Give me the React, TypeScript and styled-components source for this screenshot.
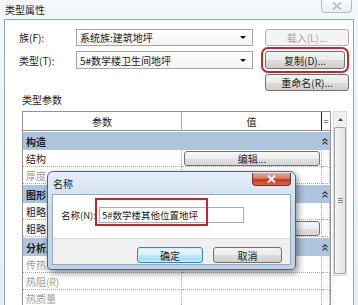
import * as React from "react";
import styled, { createGlobalStyle, css } from "styled-components";

const GlobalStyle = createGlobalStyle`
  *, *::before, *::after { box-sizing: border-box; }
  html, body { margin: 0; padding: 0; }
  body {
    width: 358px;
    height: 305px;
    overflow: hidden;
    font-family: "Noto Sans CJK SC", "Noto Sans", sans-serif;
    font-size: 10px;
    color: #1b1b1b;
  }
`;

const SWindow = styled.div`
  position: relative;
  width: 358px;
  height: 305px;
  overflow: hidden;
  display: flex;
  flex-direction: column;
  background: linear-gradient(180deg, #f4f7fb 0%, #e6edf5 100%);
`;

const STitleBar = styled.div`
  height: 20px;
  display: flex;
  align-items: flex-start;
  padding-left: 5px;
`;

const STitle = styled.span`
  font-size: 10px;
  line-height: 19px;
`;

const SWinClose = styled.div`
  margin-left: auto;
  margin-right: 6px;
  width: 31px;
  height: 13px;
  border: 1px solid #b3bcc6;
  border-top: none;
  border-radius: 0 0 4px 4px;
  background: linear-gradient(#fbfcfd, #e9edf1);
  display: flex;
  align-items: center;
  justify-content: center;
`;

const SBody = styled.div`
  flex: 1;
  margin: 0 4px;
  border: 1px solid #97a4b1;
  border-bottom: none;
  background: #fff;
  padding: 9px 0 0 14px;
  display: flex;
  flex-direction: column;
`;

const SForm = styled.div`
  display: grid;
  grid-template-columns: 45px 177px 84px;
  grid-template-rows: 17px 18px 17px;
  column-gap: 12px;
  row-gap: 5px;
`;

const SLabel = styled.span`
  align-self: center;
  white-space: nowrap;
`;

const SSelect = styled.div`
  display: flex;
  align-items: center;
  justify-content: space-between;
  border: 1px solid #a6a6a6;
  background: linear-gradient(#ffffff, #f3f3f3);
  padding: 0 6px 0 3px;
  white-space: nowrap;
`;

const SArrow = styled.span`
  width: 0;
  height: 0;
  border-left: 3px solid transparent;
  border-right: 3px solid transparent;
  border-top: 3px solid #111;
`;

const SButton = styled.div<{ $disabled?: boolean; $col?: number; $width?: number; $mark?: boolean }>`
  display: flex;
  align-items: center;
  justify-content: center;
  white-space: nowrap;
  border: 1px solid #707070;
  border-radius: 3px;
  background: linear-gradient(#f3f3f3 0%, #ebebeb 50%, #dddddd 51%, #cfcfcf 100%);
  ${({ $col }) => $col && css`grid-column: ${$col};`}
  ${({ $width }) => $width && css`width: ${$width}px;`}
  ${({ $disabled }) =>
    $disabled &&
    css`
      border-color: #adb2b5;
      background: #f4f4f4;
      color: #a3a3a3;
    `}
  ${({ $mark }) =>
    $mark &&
    css`
      outline: 2px solid #c4262d;
      outline-offset: 2px;
    `}
`;

const SSectionLabel = styled.div`
  margin: 2px 0 4px 3px;
  line-height: 14px;
`;

const STableArea = styled.div`
  display: flex;
  align-items: flex-start;
  gap: 2px;
  padding-left: 3px;
`;

const STable = styled.div`
  width: 309px;
  border: 1px solid #8d96a0;
  border-bottom: none;
  display: grid;
  grid-template-columns: 159px 140px 1fr;
`;

const SHeadCell = styled.div<{ $eq?: boolean }>`
  height: 19px;
  border-bottom: 1px solid #8d96a0;
  border-right: 1px solid #a9a9a9;
  display: flex;
  align-items: center;
  justify-content: center;
  ${({ $eq }) =>
    $eq &&
    css`
      border-right: none;
      border-left: 1px solid #222;
      margin-left: -1px;
      font-size: 9px;
    `}
`;

const SBand = styled.div`
  grid-column: 1 / -1;
  height: 19px;
  border-top: 1px solid #fff;
  background: #aec4de;
  font-weight: bold;
  display: flex;
  align-items: center;
  justify-content: space-between;
  padding: 0 2px 0 3px;
`;

const SCell = styled.div<{ $muted?: boolean; $pad?: boolean }>`
  height: 17px;
  border-bottom: 1px dotted #a8a8a8;
  border-right: 1px dotted #a8a8a8;
  white-space: nowrap;
  overflow: hidden;
  display: flex;
  align-items: center;
  ${({ $pad }) => $pad && css`padding-left: 3px;`}
  ${({ $muted }) => $muted && css`color: #9c9c9c;`}
`;

const SCellButton = styled(SButton)`
  flex: 1;
  height: 15px;
  margin: 0 1px 0 2px;
  background: linear-gradient(#fafafa 0%, #ececec 50%, #e0e0e0 51%, #d6d6d6 100%);
`;

const SScrollbar = styled.div`
  width: 14px;
  height: 165px;
  border: 1px solid #dadada;
  background: #f0f0f0;
  display: flex;
  flex-direction: column;
`;

const SScrollUp = styled.div`
  height: 15px;
  display: flex;
  align-items: center;
  justify-content: center;
`;

const SThumb = styled.div`
  flex: 1;
  margin: 0 0 1px 0;
  border: 1px solid #a2a2a2;
  border-radius: 2px;
  background: linear-gradient(90deg, #f6f6f6, #e2e2e2);
  display: flex;
  align-items: center;
  justify-content: center;
`;

const SNameDialog = styled.div`
  position: absolute;
  left: 47px;
  top: 171px;
  width: 249px;
  height: 99px;
  border: 1px solid #56626f;
  border-radius: 6px 6px 4px 4px;
  background: linear-gradient(180deg, #e6eff8 0%, #cbdcee 35%, #bdd1e7 100%);
  box-shadow: 2px 3px 7px rgba(0, 0, 0, 0.45);
  padding: 0 4px 4px;
  display: flex;
  flex-direction: column;
`;

const SDialogTitleBar = styled.div`
  height: 22px;
  display: flex;
  align-items: flex-start;
  padding-left: 1px;
`;

const SDialogTitle = styled.span`
  font-size: 10px;
  line-height: 23px;
`;

const SRedClose = styled.div`
  margin-left: auto;
  margin-top: 1px;
  width: 39px;
  height: 13px;
  border: 1px solid #7a2a1e;
  border-top: none;
  border-radius: 0 0 4px 4px;
  background: linear-gradient(#eaa99b 0%, #d9735f 45%, #c3381f 55%, #d7684c 100%);
  display: flex;
  align-items: center;
  justify-content: center;
`;

const SDialogPanel = styled.div`
  flex: 1;
  border: 1px solid #9aa9b9;
  background: #fff;
  display: flex;
  flex-direction: column;
`;

const SNameRow = styled.div`
  flex: 1;
  display: flex;
  align-items: flex-start;
  gap: 3px;
  padding: 12px 0 0 8px;
`;

const SNameLabel = styled.span`
  font-size: 9.5px;
  line-height: 16px;
  white-space: nowrap;
`;

const SInput = styled.div`
  width: 145px;
  height: 16px;
  border: 1px solid #abadb3;
  padding: 0 2px;
  font-size: 9.5px;
  line-height: 14px;
  white-space: nowrap;
`;

const SMark = styled.div`
  position: absolute;
  left: 47px;
  top: 26px;
  width: 113px;
  height: 28px;
  border: 2px solid #c4232b;
`;

const SDialogFooter = styled.div`
  height: 26px;
  background: #f0f0f0;
  border-top: 1px solid #dfdfdf;
  display: flex;
  align-items: flex-start;
  justify-content: flex-end;
  gap: 10px;
  padding: 8px 8px 0 0;
`;

const SDialogButton = styled(SButton)<{ $primary?: boolean }>`
  width: ${({ $primary }) => ($primary ? 66 : 69)}px;
  height: 16px;
  ${({ $primary }) =>
    $primary &&
    css`
      border-color: #3c7fb1;
      background: linear-gradient(#eaf6fd 0%, #d9f0fc 50%, #bee6fd 51%, #a7d9f5 100%);
      box-shadow: inset 0 0 0 1px #d6eefb;
    `}
`;

const Chevrons = () => (
  <svg width="6" height="7" viewBox="0 0 6 7">
    <polyline points="0.5,3.2 3,0.8 5.5,3.2" fill="none" stroke="#333" strokeWidth="1.1" />
    <polyline points="0.5,6.4 3,4 5.5,6.4" fill="none" stroke="#333" strokeWidth="1.1" />
  </svg>
);

type Row =
  | { band: string }
  | { name: string; muted?: boolean; button?: string };

const rows: Row[] = [
  { band: "构造" },
  { name: "结构", button: "编辑..." },
  { name: "厚度", muted: true },
  { band: "图形" },
  { name: "粗略比例填充样式" },
  { name: "粗略比例填充颜色", button: "黑色" },
  { band: "分析属性" },
  { name: "传热系数(U)", muted: true },
  { name: "热阻(R)", muted: true },
  { name: "热质量", muted: true },
];

const App = () => (
  <>
    <GlobalStyle />
    <SWindow>
      <STitleBar>
        <STitle>类型属性</STitle>
        <SWinClose>
          <svg width="10" height="8" viewBox="0 0 10 8">
            <path d="M1 0.5 L9 7.5 M9 0.5 L1 7.5" stroke="#9aa0a6" strokeWidth="1.6" />
            <path d="M1 0.5 L9 7.5 M9 0.5 L1 7.5" stroke="#f4f6f8" strokeWidth="0.5" />
          </svg>
        </SWinClose>
      </STitleBar>
      <SBody>
        <SForm>
          <SLabel>族(F):</SLabel>
          <SSelect>
            系统族:建筑地坪
            <SArrow />
          </SSelect>
          <SButton $disabled>载入(L)...</SButton>
          <SLabel>类型(T):</SLabel>
          <SSelect>
            5#数学楼卫生间地坪
            <SArrow />
          </SSelect>
          <SButton $width={80} $mark>
            复制(D)...
          </SButton>
          <SButton $col={3}>重命名(R)...</SButton>
        </SForm>
        <SSectionLabel>类型参数</SSectionLabel>
        <STableArea>
          <STable>
            <SHeadCell>参数</SHeadCell>
            <SHeadCell>值</SHeadCell>
            <SHeadCell $eq>=</SHeadCell>
            {rows.map((r, i) =>
              "band" in r ? (
                <SBand key={i}>
                  {r.band}
                  <Chevrons />
                </SBand>
              ) : (
                <React.Fragment key={i}>
                  <SCell $pad $muted={r.muted}>
                    {r.name}
                  </SCell>
                  <SCell>{r.button && <SCellButton>{r.button}</SCellButton>}</SCell>
                  <SCell />
                </React.Fragment>
              )
            )}
          </STable>
          <SScrollbar>
            <SScrollUp>
              <svg width="5" height="3" viewBox="0 0 5 3">
                <polygon points="0,3 2.5,0 5,3" fill="#444" />
              </svg>
            </SScrollUp>
            <SThumb>
              <svg width="5" height="5" viewBox="0 0 5 5">
                <path d="M0 0.5 H5 M0 2.5 H5 M0 4.5 H5" stroke="#8a8a8a" strokeWidth="1" />
              </svg>
            </SThumb>
          </SScrollbar>
        </STableArea>
      </SBody>
      <SNameDialog>
        <SDialogTitleBar>
          <SDialogTitle>名称</SDialogTitle>
          <SRedClose>
            <svg width="9" height="8" viewBox="0 0 9 8">
              <path d="M1 0.5 L8 7.5 M8 0.5 L1 7.5" stroke="#fff" strokeWidth="2" />
            </svg>
          </SRedClose>
        </SDialogTitleBar>
        <SDialogPanel>
          <SNameRow>
            <SNameLabel>名称(N):</SNameLabel>
            <SInput>5#数学楼其他位置地坪</SInput>
          </SNameRow>
          <SDialogFooter>
            <SDialogButton $primary>确定</SDialogButton>
            <SDialogButton>取消</SDialogButton>
          </SDialogFooter>
        </SDialogPanel>
        <SMark />
      </SNameDialog>
    </SWindow>
  </>
);

export default App;
